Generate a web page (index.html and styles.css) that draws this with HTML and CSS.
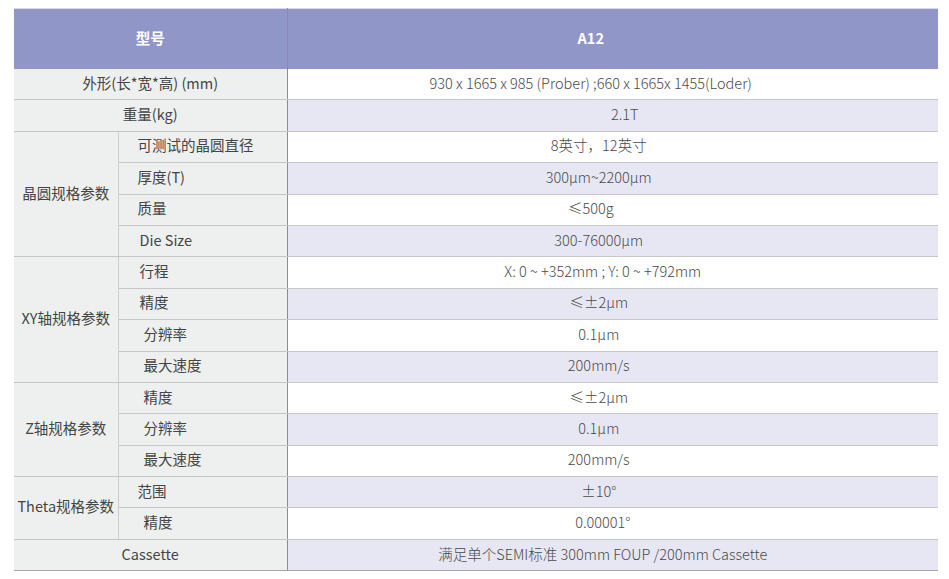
FILE: index.html
```html
<!DOCTYPE html>
<html lang="zh-CN">
<head>
<meta charset="utf-8">
<title>A12 规格参数</title>
<link rel="stylesheet" href="styles.css">
</head>
<body>
<table class="spec">
  <colgroup>
    <col class="col-grp">
    <col class="col-sub">
    <col class="col-val">
  </colgroup>
  <thead>
    <tr>
      <th colspan="2" class="h-label">型号</th>
      <th class="h-val">A12</th>
    </tr>
  </thead>
  <tbody>
    <tr class="w"><td colspan="2" class="lab c">外形(长*宽*高) (mm)</td><td class="val sl">930 x 1665 x 985 (Prober) ;660 x 1665x 1455(Loder)</td></tr>
    <tr class="p"><td colspan="2" class="lab c">重量(kg)</td><td class="val sr">2.1T</td></tr>
    <tr class="w"><td rowspan="4" class="grp">晶圆规格参数</td><td class="sub">可测试的晶圆直径</td><td class="val">8英寸，12英寸</td></tr>
    <tr class="p"><td class="sub">厚度(T)</td><td class="val">300μm~2200μm</td></tr>
    <tr class="w"><td class="sub">质量</td><td class="val sl">≤500g</td></tr>
    <tr class="p"><td class="sub s1">Die Size</td><td class="val">300-76000μm</td></tr>
    <tr class="w"><td rowspan="4" class="grp">XY轴规格参数</td><td class="sub s1">行程</td><td class="val sm">X: 0 ~ +352mm ; Y: 0 ~ +792mm</td></tr>
    <tr class="p"><td class="sub s1">精度</td><td class="val">≤±2μm</td></tr>
    <tr class="w"><td class="sub s2">分辨率</td><td class="val">0.1μm</td></tr>
    <tr class="p"><td class="sub s2">最大速度</td><td class="val">200mm/s</td></tr>
    <tr class="w"><td rowspan="3" class="grp">Z轴规格参数</td><td class="sub s2">精度</td><td class="val">≤±2μm</td></tr>
    <tr class="p"><td class="sub s2">分辨率</td><td class="val">0.1μm</td></tr>
    <tr class="w"><td class="sub s2">最大速度</td><td class="val">200mm/s</td></tr>
    <tr class="p"><td rowspan="2" class="grp">Theta规格参数</td><td class="sub">范围</td><td class="val">±10°</td></tr>
    <tr class="w"><td class="sub s2">精度</td><td class="val sm">0.00001°</td></tr>
    <tr class="p last"><td colspan="2" class="lab c">Cassette</td><td class="val sm">满足单个SEMI标准 300mm FOUP /200mm Cassette</td></tr>
  </tbody>
</table>
</body>
</html>
```

FILE: styles.css
```css
html, body {
  margin: 0;
  padding: 0;
  background: #ffffff;
}
body {
  padding: 8px 0 0 14px;
  font-family: "Noto Sans CJK SC", "Noto Sans", sans-serif;
  color: #444444;
}
.spec {
  border-collapse: collapse;
  width: 924px;
  table-layout: fixed;
  font-size: 14.5px;
}
.col-grp { width: 104px; }
.col-sub { width: 169px; }
.spec th {
  background: #9097c8;
  color: #ffffff;
  font-weight: 700;
  font-size: 14.5px;
  height: 57px;
  padding: 0 0 3px 0;
  border-top: 1px solid #d8daec;
}
.h-label {
  border-right: 1px solid #8a8ab0;
}
.spec th.h-val {
  padding-right: 44px;
}
.spec td {
  height: 27.4px;
  padding: 0 0 3px 0;
  border-bottom: 1px solid #c6c6c6;
  line-height: 18px;
  white-space: nowrap;
}
.lab, .grp, .sub {
  background: #eef0ef;
  color: #444444;
}
.c, .grp {
  text-align: center;
}
.grp {
  border-right: 1px solid #cdcdcd;
}
.spec td.sub {
  padding-left: 19px;
  text-align: left;
}
.spec td.sub.s1 { padding-left: 21px; }
.spec td.sub.s2 { padding-left: 25px; }
.lab, .sub {
  border-right: 1px solid #8c8c8c;
}
.spec td.val {
  text-align: center;
  font-weight: 300;
  color: #4a4a4a;
  padding-right: 28px;
}
.spec td.val.sl { padding-right: 44px; }
.spec td.val.sm { padding-right: 20px; }
.spec td.val.sr { padding-right: 0; padding-left: 24px; }
.w .val { background: #ffffff; }
.p .val { background: #e7e7f3; }
.last td {
  border-bottom: 1px solid #a8a8a8;
}
```
